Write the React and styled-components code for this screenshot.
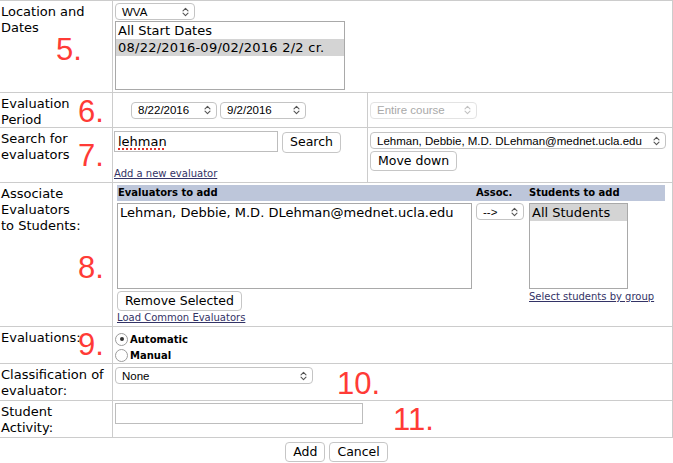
import React from "react";
import styled, { createGlobalStyle } from "styled-components";

const line = "#cccccc";

const GlobalStyle = createGlobalStyle`
  body {
    margin: 0;
    background: #fff;
    color: #000;
    font-family: "DejaVu Sans", Verdana, sans-serif;
  }
`;

const Form = styled.div`
  width: 673px;
`;

const Table = styled.div`
  display: flex;
  flex-direction: column;
  border-top: 1px solid ${line};
  border-right: 1px solid ${line};
`;

const Row = styled.div`
  position: relative;
  display: flex;
  height: ${(p) => p.$h}px;
  border-bottom: 1px solid ${line};
`;

const Label = styled.div`
  box-sizing: border-box;
  flex: none;
  width: 113px;
  padding: 3px 0 0 1px;
  border-right: 1px solid ${line};
  font-size: 13px;
  line-height: 16px;
`;

const Cell = styled.div`
  box-sizing: border-box;
  flex: ${(p) => (p.$w ? "none" : 1)};
  width: ${(p) => (p.$w ? `${p.$w}px` : "auto")};
  display: flex;
  flex-direction: ${(p) => (p.$row ? "row" : "column")};
  align-items: ${(p) => (p.$center ? "center" : "flex-start")};
  gap: ${(p) => p.$gap || 0}px;
  padding: ${(p) => p.$pad || "0"};
  border-right: ${(p) => (p.$w ? `1px solid ${line}` : "none")};
`;

const Note = styled.span`
  position: absolute;
  left: ${(p) => p.$x}px;
  top: ${(p) => p.$y}px;
  font-family: "Liberation Sans", Arial, sans-serif;
  font-size: 31px;
  line-height: 1;
  color: #ff3b36;
  pointer-events: none;
`;

const SelectBox = styled.div`
  box-sizing: border-box;
  flex: none;
  width: ${(p) => p.$w}px;
  height: 17px;
  display: flex;
  align-items: center;
  justify-content: space-between;
  padding: 0 5px 0 6px;
  border: 1px solid ${(p) => (p.$disabled ? "#e3e3e3" : "#c4c4c4")};
  border-radius: 4px;
  background: #fff;
  font-family: "Liberation Sans", Arial, sans-serif;
  font-size: 11.5px;
  color: ${(p) => (p.$disabled ? "#a9a9a9" : "#000")};
  white-space: nowrap;
`;

const ListBox = styled.div`
  box-sizing: border-box;
  flex: none;
  width: ${(p) => p.$w}px;
  height: ${(p) => p.$h}px;
  border: 1px solid #a9a9a9;
  background: #fff;
  font-size: 13px;
  overflow: hidden;
`;

const Option = styled.div`
  height: 17px;
  line-height: 17px;
  padding-left: 2px;
  white-space: nowrap;
  letter-spacing: ${(p) => p.$track || 0}px;
  background: ${(p) => (p.$selected ? "#d4d4d4" : "transparent")};
`;

const Button = styled.button`
  box-sizing: border-box;
  flex: none;
  height: ${(p) => p.$h || 20}px;
  margin: ${(p) => p.$m || "0"};
  padding: 0 7px;
  border: 1px solid #c6c6c6;
  border-radius: 4px;
  background: #fff;
  font-family: "DejaVu Sans", Verdana, sans-serif;
  font-size: ${(p) => p.$size || 12.5}px;
  line-height: 1;
  color: #000;
`;

const TextBox = styled.div`
  box-sizing: border-box;
  flex: none;
  width: ${(p) => p.$w}px;
  height: 21px;
  display: flex;
  align-items: center;
  padding: 0 3px;
  border: 1px solid #bdbdbd;
  background: #fff;
  font-size: 13px;
`;

const Misspelled = styled.span`
  text-decoration: underline dotted #e0302a;
  text-decoration-thickness: 2px;
  text-underline-offset: 2px;
`;

const Inline = styled.div`
  display: flex;
  align-items: flex-start;
`;

const Link = styled.a`
  display: block;
  margin-top: ${(p) => p.$mt || 0}px;
  font-size: 10px;
  line-height: 12px;
  color: #333366;
  text-decoration: underline;
  white-space: nowrap;
`;

const AssocGrid = styled.div`
  display: grid;
  grid-template-columns: 359px 53px 136px;
  grid-template-rows: 16px auto auto;
  row-gap: 2px;
  align-items: start;
`;

const HeadCell = styled.div`
  height: 16px;
  padding-left: ${(p) => p.$pl || 0}px;
  background: #bdc6da;
  font-size: 10px;
  font-weight: bold;
  line-height: 16px;
  white-space: nowrap;
`;

const Stack = styled.div`
  display: flex;
  flex-direction: column;
  align-items: flex-start;
`;

const RadioRow = styled.label`
  display: flex;
  align-items: center;
  gap: 2px;
  height: 16px;
  font-size: 10px;
  font-weight: bold;
`;

const RadioDot = styled.span`
  box-sizing: border-box;
  width: 13px;
  height: 13px;
  display: flex;
  align-items: center;
  justify-content: center;
  border: 1px solid #9c9c9c;
  border-radius: 50%;
  background: #fff;

  &::after {
    content: "";
    width: 4px;
    height: 4px;
    border-radius: 50%;
    background: ${(p) => (p.$on ? "#333" : "transparent")};
  }
`;

const Footer = styled.div`
  display: flex;
  justify-content: center;
  gap: 4px;
  padding-top: 4px;
`;

const Chevrons = ({ color }) => (
  <svg width="7" height="10" viewBox="0 0 7 10" fill="none" stroke={color} strokeWidth="1.1" strokeLinecap="round" strokeLinejoin="round">
    <path d="M1 3.8 L3.5 1.3 L6 3.8" />
    <path d="M1 6.2 L3.5 8.7 L6 6.2" />
  </svg>
);

const Select = ({ w, disabled, children }) => (
  <SelectBox $w={w} $disabled={disabled}>
    <span>{children}</span>
    <Chevrons color={disabled ? "#c2c2c2" : "#555"} />
  </SelectBox>
);

const Radio = ({ on, children }) => (
  <RadioRow>
    <RadioDot $on={on} />
    {children}
  </RadioRow>
);

const App = () => {
  return (
    <Form>
      <GlobalStyle />
      <Table>
        <Row $h={91}>
          <Label>Location and<br />Dates</Label>
          <Cell $pad="2px 0 0 2px" $gap={1}>
            <Select w={80}>WVA</Select>
            <ListBox $w={230} $h={69}>
              <Option>All Start Dates</Option>
              <Option $selected $track={0.25}>08/22/2016-09/02/2016 2/2 cr.</Option>
            </ListBox>
          </Cell>
          <Note $x={56} $y={33}>5.</Note>
        </Row>

        <Row $h={34}>
          <Label>Evaluation<br />Period</Label>
          <Cell $w={255} $row $center $gap={3} $pad="0 0 0 18px">
            <Select w={86}>8/22/2016</Select>
            <Select w={86}>9/2/2016</Select>
          </Cell>
          <Cell $row $center $pad="0 0 0 2px">
            <Select w={107} disabled>Entire course</Select>
          </Cell>
          <Note $x={78} $y={3}>6.</Note>
        </Row>

        <Row $h={54}>
          <Label>Search for<br />evaluators</Label>
          <Cell $w={255} $pad="3px 0 0 1px">
            <Inline>
              <TextBox $w={164}>
                <Misspelled>lehman</Misspelled>
              </TextBox>
              <Button $h={21} $m="1px 0 0 4px">Search</Button>
            </Inline>
            <Link href="#" $mt={15}>Add a new evaluator</Link>
          </Cell>
          <Cell $pad="4px 0 0 2px" $gap={2}>
            <Select w={296}>Lehman, Debbie, M.D. DLehman@mednet.ucla.edu</Select>
            <Button>Move down</Button>
          </Cell>
          <Note $x={78} $y={12}>7.</Note>
        </Row>

        <Row $h={143}>
          <Label>Associate<br />Evaluators<br />to Students:</Label>
          <Cell $pad="2px 0 0 4px">
            <AssocGrid>
              <HeadCell $pl={1}>Evaluators to add</HeadCell>
              <HeadCell>Assoc.</HeadCell>
              <HeadCell>Students to add</HeadCell>

              <ListBox $w={355} $h={86}>
                <Option>Lehman, Debbie, M.D. DLehman@mednet.ucla.edu</Option>
              </ListBox>
              <Select w={48}>--&gt;</Select>
              <ListBox $w={99} $h={86}>
                <Option $selected>All Students</Option>
              </ListBox>

              <Stack>
                <Button $size={12.5}>Remove Selected</Button>
                <Link href="#" $mt={1}>Load Common Evaluators</Link>
              </Stack>
              <span />
              <Link href="#">Select students by group</Link>
            </AssocGrid>
          </Cell>
          <Note $x={78} $y={69}>8.</Note>
        </Row>

        <Row $h={36}>
          <Label>Evaluations:</Label>
          <Cell $pad="4px 0 0 2px">
            <Radio on>Automatic</Radio>
            <Radio>Manual</Radio>
          </Cell>
          <Note $x={78} $y={2}>9.</Note>
        </Row>

        <Row $h={36}>
          <Label>Classification of<br />evaluator:</Label>
          <Cell $pad="3px 0 0 2px">
            <Select w={198}>None</Select>
          </Cell>
          <Note $x={337} $y={4}>10.</Note>
        </Row>

        <Row $h={36}>
          <Label>Student<br />Activity:</Label>
          <Cell $pad="2px 0 0 2px">
            <TextBox $w={248} />
          </Cell>
          <Note $x={393} $y={3}>11.</Note>
        </Row>
      </Table>

      <Footer>
        <Button>Add</Button>
        <Button>Cancel</Button>
      </Footer>
    </Form>
  );
};

export default App;
